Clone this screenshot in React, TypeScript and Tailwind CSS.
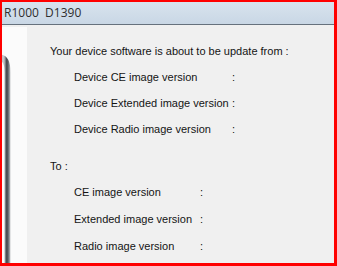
import React from "react";

const font = { fontFamily: '"Liberation Sans", Arial, sans-serif' };

function Row({ label, w, h }: { label: string; w: string; h: string }) {
  return (
    <div className={`flex items-center pl-[24px] ${h}`}>
      <span className={`${w} whitespace-nowrap`}>{label}</span>
      <span>:</span>
    </div>
  );
}

export default function App() {
  return (
    <div className="w-[337px] h-[266px] box-border border-[#f00] border-l-2 border-t-2 border-r-[3px] border-b-[3px] bg-[#f0f0f0] flex flex-col overflow-hidden">
      <div
        className="h-[23px] shrink-0 border-b border-[#66717d] bg-gradient-to-b from-[#d8e3ee] to-[#c9d7e5] pl-[2px] flex items-center text-[12px] text-[#2e2e2e] whitespace-pre"
        style={{ fontFamily: '"Open Sans", "Noto Sans", sans-serif' }}
      >
        R1000  D1390
      </div>
      <div className="flex flex-1 min-h-0">
        <div className="w-[25px] shrink-0 mt-[2px] bg-[#fbfbfb] relative overflow-hidden">
          <svg width="25" height="240" className="absolute left-0 top-0">
            <defs>
              <linearGradient id="edge" gradientUnits="userSpaceOnUse" x1="2" y1="0" x2="9" y2="0">
                <stop offset="0" stopColor="#c4c7ca" />
                <stop offset="0.4" stopColor="#3c4046" />
                <stop offset="0.7" stopColor="#7c8086" />
                <stop offset="1" stopColor="#e4e5e6" />
              </linearGradient>
            </defs>
            <path d="M -3 30.5 Q 5.5 30.5 5.5 45 L 5.5 240" fill="none" stroke="url(#edge)" strokeWidth="6" />
          </svg>
        </div>
        <div className="flex-1 pl-[23px] pt-[13px] text-[11px] leading-[13px] text-[#141414]" style={font}>
          <div className="h-[26px] flex items-center whitespace-nowrap">Your device software is about to be update from :</div>
          <Row label="Device CE image version" w="w-[158px]" h="h-[26px]" />
          <Row label="Device Extended image version" w="w-[158px]" h="h-[26px]" />
          <Row label="Device Radio image version" w="w-[158px]" h="h-[26px]" />
          <div className="h-[26px] mt-[11px] flex items-center">To :</div>
          <Row label="CE image version" w="w-[126px]" h="h-[27px]" />
          <Row label="Extended image version" w="w-[126px]" h="h-[27px]" />
          <Row label="Radio image version" w="w-[126px]" h="h-[27px]" />
        </div>
      </div>
    </div>
  );
}
